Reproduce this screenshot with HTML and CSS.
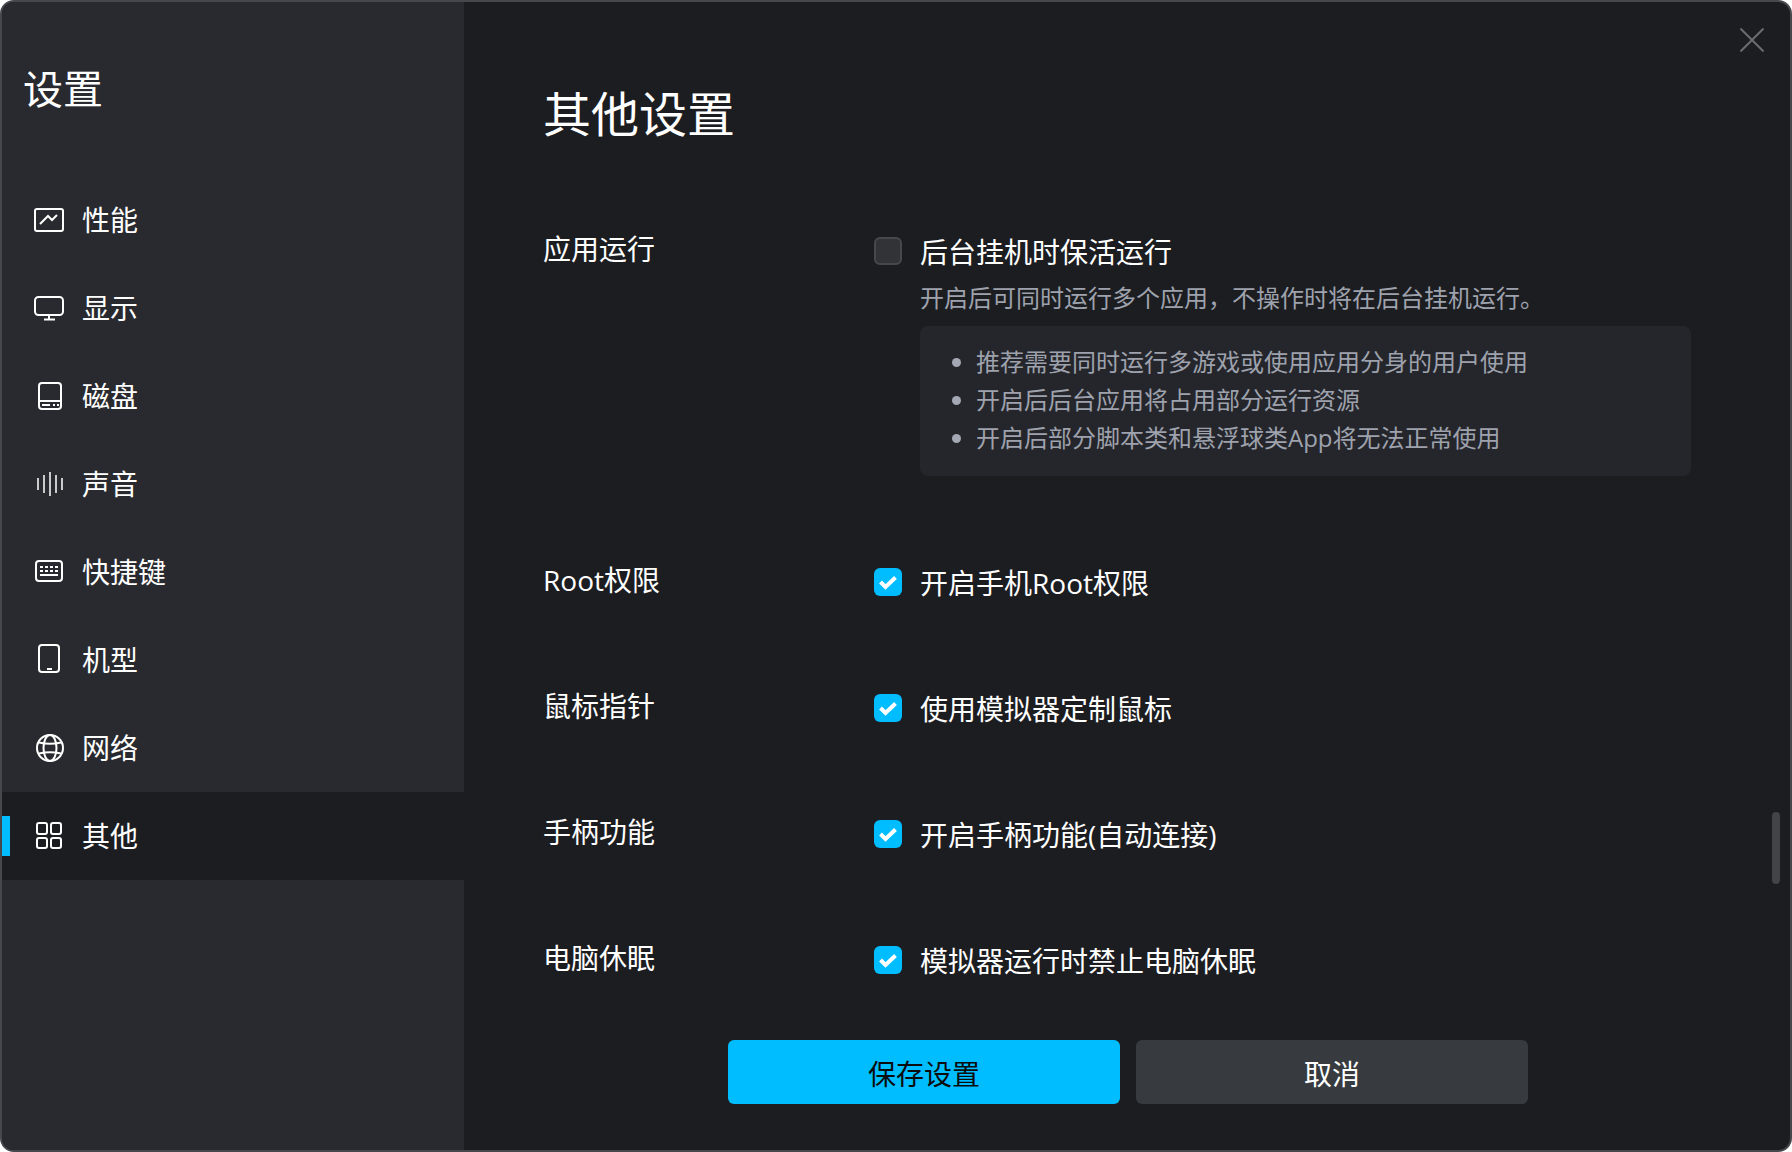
FILE: index.html
```html
<!DOCTYPE html>
<html lang="zh-CN">
<head>
<meta charset="utf-8">
<title>设置</title>
<link rel="stylesheet" href="styles.css">
</head>
<body>
<div class="window">
  <aside class="sidebar">
    <h2 class="side-title">设置</h2>
    <nav class="nav">
      <div class="nav-item"><svg class="nav-icon" viewBox="0 0 32 32"><rect x="2" y="5" width="28" height="22" rx="2"/><path d="M7 20l8-8 4 4 5-5"/></svg><span>性能</span></div>
      <div class="nav-item"><svg class="nav-icon" viewBox="0 0 32 32"><rect x="2" y="5" width="28" height="18" rx="3.500"/><path d="M16 23v4M11 27.500h11"/></svg><span>显示</span></div>
      <div class="nav-item"><svg class="nav-icon" viewBox="0 0 32 32"><rect x="6" y="3" width="22" height="26" rx="3"/><path d="M6 21h22M9 25h8M20 25h2M24 25h2"/></svg><span>磁盘</span></div>
      <div class="nav-item"><svg class="nav-icon thin" viewBox="0 0 32 32"><path d="M5 10v12M11 7v18M17 4v24M23 7v18M29 10v12"/></svg><span>声音</span></div>
      <div class="nav-item"><svg class="nav-icon" viewBox="0 0 32 32"><rect x="3" y="5" width="26" height="20" rx="3"/><path class="dots" d="M7 11h18M7 15h18"/><path d="M7 19h18"/></svg><span>快捷键</span></div>
      <div class="nav-item"><svg class="nav-icon" viewBox="0 0 32 32"><rect x="6" y="1" width="20" height="27" rx="3"/><path d="M14 25h5"/></svg><span>机型</span></div>
      <div class="nav-item"><svg class="nav-icon" viewBox="0 0 32 32"><circle cx="17" cy="16" r="13"/><ellipse cx="17" cy="16" rx="6.500" ry="13"/><path d="M6 10.500q11 2.500 22 0M6 21.500q11-2.500 22 0"/></svg><span>网络</span></div>
      <div class="nav-item active"><svg class="nav-icon" viewBox="0 0 32 32"><rect x="4" y="3" width="10" height="11" rx="2"/><rect x="18" y="3" width="10" height="11" rx="2"/><rect x="4" y="18" width="10" height="10" rx="2"/><rect x="18" y="18" width="10" height="10" rx="2"/></svg><span>其他</span></div>
    </nav>
  </aside>
  <main class="main">
    <h1 class="main-title">其他设置</h1>
    <div class="settings">
      <section class="row">
        <div class="row-label">应用运行</div>
        <div class="row-body">
          <label class="check"><span class="box"></span><span class="check-text">后台挂机时保活运行</span></label>
          <p class="desc">开启后可同时运行多个应用，不操作时将在后台挂机运行。</p>
          <ul class="notes">
            <li>推荐需要同时运行多游戏或使用应用分身的用户使用</li>
            <li>开启后后台应用将占用部分运行资源</li>
            <li>开启后部分脚本类和悬浮球类App将无法正常使用</li>
          </ul>
        </div>
      </section>
      <section class="row">
        <div class="row-label">Root权限</div>
        <div class="row-body"><label class="check"><span class="box on"><svg viewBox="0 0 28 28"><path d="M6.500 14l5 5 10-9.500"/></svg></span><span class="check-text">开启手机Root权限</span></label></div>
      </section>
      <section class="row">
        <div class="row-label">鼠标指针</div>
        <div class="row-body"><label class="check"><span class="box on"><svg viewBox="0 0 28 28"><path d="M6.500 14l5 5 10-9.500"/></svg></span><span class="check-text">使用模拟器定制鼠标</span></label></div>
      </section>
      <section class="row">
        <div class="row-label">手柄功能</div>
        <div class="row-body"><label class="check"><span class="box on"><svg viewBox="0 0 28 28"><path d="M6.500 14l5 5 10-9.500"/></svg></span><span class="check-text">开启手柄功能(自动连接)</span></label></div>
      </section>
      <section class="row">
        <div class="row-label">电脑休眠</div>
        <div class="row-body"><label class="check"><span class="box on"><svg viewBox="0 0 28 28"><path d="M6.500 14l5 5 10-9.500"/></svg></span><span class="check-text">模拟器运行时禁止电脑休眠</span></label></div>
      </section>
    </div>
    <footer class="actions">
      <button class="btn primary">保存设置</button>
      <button class="btn">取消</button>
    </footer>
    <svg class="close" viewBox="0 0 24 24"><path d="M0.500 0.500l23 23M23.500 0.500l-23 23"/></svg>
    <div class="scroll-thumb"></div>
  </main>
</div>
</body>
</html>
```
FILE: styles.css
```css
* { box-sizing: border-box; }
html, body { margin: 0; height: 100%; background: #ffffff; }
body { font-family: "Open Sans", "Noto Sans CJK SC", sans-serif; color: #fff; }
.window {
  width: 1792px; height: 1152px; display: flex; overflow: hidden;
  border: 2px solid #47484d; border-radius: 14px; background: #1c1d21;
}
.sidebar { width: 462px; flex: none; background: #292a2f; display: flex; flex-direction: column; }
.side-title { margin: 0; padding: 57px 0 0 21px; height: 174px; font-size: 40px; line-height: 60px; font-weight: 400; }
.nav { display: flex; flex-direction: column; }
.nav-item { height: 88px; display: flex; align-items: center; gap: 17px; padding-left: 31px; font-size: 28px; line-height: 40px; position: relative; }
.nav-item.active { background: #1c1d21; }
.nav-item.active::before { content: ""; position: absolute; left: 0; top: 24px; width: 8px; height: 40px; background: #00bdff; }
.nav-icon { width: 32px; height: 32px; flex: none; fill: none; stroke: #fff; stroke-width: 2; }
.nav-icon.thin { stroke-width: 1.500; }
.nav-icon .dots { stroke-dasharray: 3 2; }
.main { flex: 1; min-height: 0; position: relative; padding: 78px 0 0 79px; display: flex; flex-direction: column; }
.main-title { margin: 0; font-size: 48px; line-height: 68px; font-weight: 400; }
.settings { margin-top: 82px; flex: 1; min-height: 0; display: flex; flex-direction: column; }
.row { display: grid; grid-template-columns: 331px 817px; margin-bottom: 84px; }
.row:first-child { margin-bottom: 85px; }
.row:last-child { margin-bottom: 0; }
.row-label { font-size: 28px; line-height: 40px; margin-top: -1px; }
.check { display: flex; align-items: center; gap: 18px; font-size: 28px; line-height: 40px; height: 42px; }
.check-text { padding-top: 2px; }
.box { width: 28px; height: 28px; flex: none; border-radius: 6px; background: #323337; border: 2px solid #47484d; }
.box.on { background: #00bdff; border: 0; }
.box svg { display: block; width: 28px; height: 28px; fill: none; stroke: #fff; stroke-width: 4; }
.desc { margin: 9px 0 0; padding-left: 46px; font-size: 24px; line-height: 34px; color: #9ea2ad; }
.notes { margin: 11px 0 0 46px; padding: 17px 0 11px 56px; background: #25262b; border-radius: 8px; font-size: 24px; line-height: 38px; color: #9ea2ad; height: 150px; }
.notes li::marker { color: #a4a8b4; }
.actions { display: flex; gap: 16px; padding: 0 0 46px 185px; }
.btn { width: 392px; height: 64px; padding: 1px 0 0; border: 0; border-radius: 6px; background: #373b3f; color: #fff; font: inherit; font-size: 28px; }
.btn.primary { background: #00bdff; color: #0b0c0e; }
.close { position: absolute; top: 26px; right: 26px; width: 24px; height: 24px; fill: none; stroke: #6b6d70; stroke-width: 2; }
.scroll-thumb { position: absolute; top: 810px; left: 1308px; width: 8px; height: 72px; border-radius: 4px; background: #434448; }
```
